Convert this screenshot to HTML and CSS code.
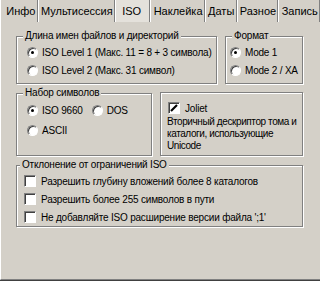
FILE: index.html
```html
<!DOCTYPE html>
<html lang="ru">
<head>
    <meta charset="UTF-8">
    <title>Свойства диска - ISO</title>
    <link rel="stylesheet" href="styles.css">
</head>
<body>
    <div class="dialog">
        <div class="tabs">
            <div class="tab tab-first">Инфо</div>
            <div class="tab">Мультисессия</div>
            <div class="tab tab-active">ISO</div>
            <div class="tab">Наклейка</div>
            <div class="tab">Даты</div>
            <div class="tab">Разное</div>
            <div class="tab">Запись</div>
        </div>

        <div class="panel">
            <div class="row row-top">
                <fieldset class="group group-names">
                    <legend>Длина имен файлов и директорий</legend>
                    <label class="option"><span class="radio checked"></span>ISO Level 1 (Макс. 11 = 8 + 3 символа)</label>
                    <label class="option"><span class="radio"></span>ISO Level 2 (Макс. 31 символ)</label>
                </fieldset>

                <fieldset class="group group-format">
                    <legend>Формат</legend>
                    <label class="option"><span class="radio checked"></span>Mode 1</label>
                    <label class="option"><span class="radio"></span>Mode 2 / XA</label>
                </fieldset>
            </div>

            <div class="row row-mid">
                <fieldset class="group group-charset">
                    <legend>Набор символов</legend>
                    <div class="option-line">
                        <label class="option"><span class="radio checked"></span>ISO 9660</label>
                        <label class="option"><span class="radio"></span>DOS</label>
                    </div>
                    <label class="option"><span class="radio"></span>ASCII</label>
                </fieldset>

                <div class="group group-joliet">
                    <label class="option"><span class="checkbox checked">
                        <svg width="8" height="8" viewBox="0 0 8 8"><path d="M1 7 L7 1" stroke="#000" stroke-width="2.2" fill="none"/></svg>
                    </span>Joliet</label>
                    <div class="joliet-note">Вторичный дескриптор тома и каталоги, использующие Unicode</div>
                </div>
            </div>

            <fieldset class="group group-iso">
                <legend>Отклонение от ограничений ISO</legend>
                <label class="option"><span class="checkbox"></span>Разрешить глубину вложений более 8 каталогов</label>
                <label class="option"><span class="checkbox"></span>Разрешить более 255 символов в пути</label>
                <label class="option"><span class="checkbox"></span>Не добавляйте ISO расширение версии файла ';1'</label>
            </fieldset>
        </div>
    </div>
</body>
</html>
```

FILE: styles.css
```css
/* Общие стили */
body {
    margin: 0;
    background-color: #d4d0c8;
    font-family: 'Liberation Sans', Arial, sans-serif;
    font-size: 10px;
    letter-spacing: -0.2px;
    color: #000000;
}

.dialog {
    width: 320px;
    height: 281px;
    overflow: hidden;
}

/* Вкладки */
.tabs {
    display: flex;
    height: 22px;
    font-size: 11px;
    letter-spacing: 0;
    white-space: nowrap;
}

.tab {
    flex: auto;
    padding: 0 1px 0 2px;
    text-align: center;
    line-height: 22px;
    border-left: 1px solid #ffffff;
    border-right: 1px solid #808080;
    box-shadow: 1px 0 0 #404040;
}

.tab-first {
    padding-left: 5px;
}

.tab-active {
    background-color: #e4e1db;
    padding: 0 8px 0 6px;
}

/* Панель */
.panel {
    height: 249px;
    padding: 8px 17px 0 15px;
    border-left: 1px solid #ffffff;
    border-bottom: 1px solid #808080;
    box-shadow: 0 1px 0 #404040;
}

.row {
    display: flex;
}

.row-top {
    gap: 8px;
}

.row-mid {
    gap: 8px;
    margin-top: 3px;
}

/* Рамки групп */
.group {
    margin: 0;
    padding: 1px 0 4px 10px;
    border: 1px solid #808080;
    box-shadow: inset 1px 1px 0 #ffffff, 1px 1px 0 #ffffff;
    min-width: 0;
}

.group legend {
    line-height: 12px;
    padding: 0 2px;
    margin-left: -4px;
    background-color: #d4d0c8;
}

.group-names {
    width: 189px;
}

.group-format {
    flex: 1;
    padding-left: 4px;
}

.group-format legend {
    margin-left: 2px;
}

.group-charset {
    width: 124px;
    padding-bottom: 15px;
}

.group-joliet {
    flex: 1;
    margin-top: 5px;
    padding: 6px 1px 2px 6px;
}

.group-iso {
    margin-top: 3px;
    padding: 1px 0 0 7px;
}

/* Переключатели и флажки */
.option {
    display: flex;
    align-items: center;
    height: 18px;
    white-space: nowrap;
}

.group-joliet .option {
    padding-left: 1px;
}

.group-charset .option {
    height: 20px;
}

.option-line {
    display: flex;
    gap: 9px;
}

.radio {
    position: relative;
    box-sizing: border-box;
    width: 11px;
    height: 11px;
    margin-right: 4px;
    border-radius: 50%;
    background-color: #ffffff;
    border: 1px solid;
    border-color: #808080 #ffffff #ffffff #808080;
    box-shadow: inset 1px 1px 0 #404040;
}

.radio.checked::after {
    content: '';
    position: absolute;
    left: 3px;
    top: 3px;
    width: 3px;
    height: 3px;
    border-radius: 50%;
    background-color: #000000;
}

.checkbox {
    display: flex;
    align-items: center;
    justify-content: center;
    box-sizing: border-box;
    width: 12px;
    height: 12px;
    margin-right: 5px;
    background-color: #ffffff;
    border: 1px solid;
    border-color: #808080 #ffffff #ffffff #808080;
    box-shadow: inset 1px 1px 0 #404040;
}

.joliet-note {
    margin-top: -1px;
    line-height: 12px;
    letter-spacing: -0.4px;
}
```
